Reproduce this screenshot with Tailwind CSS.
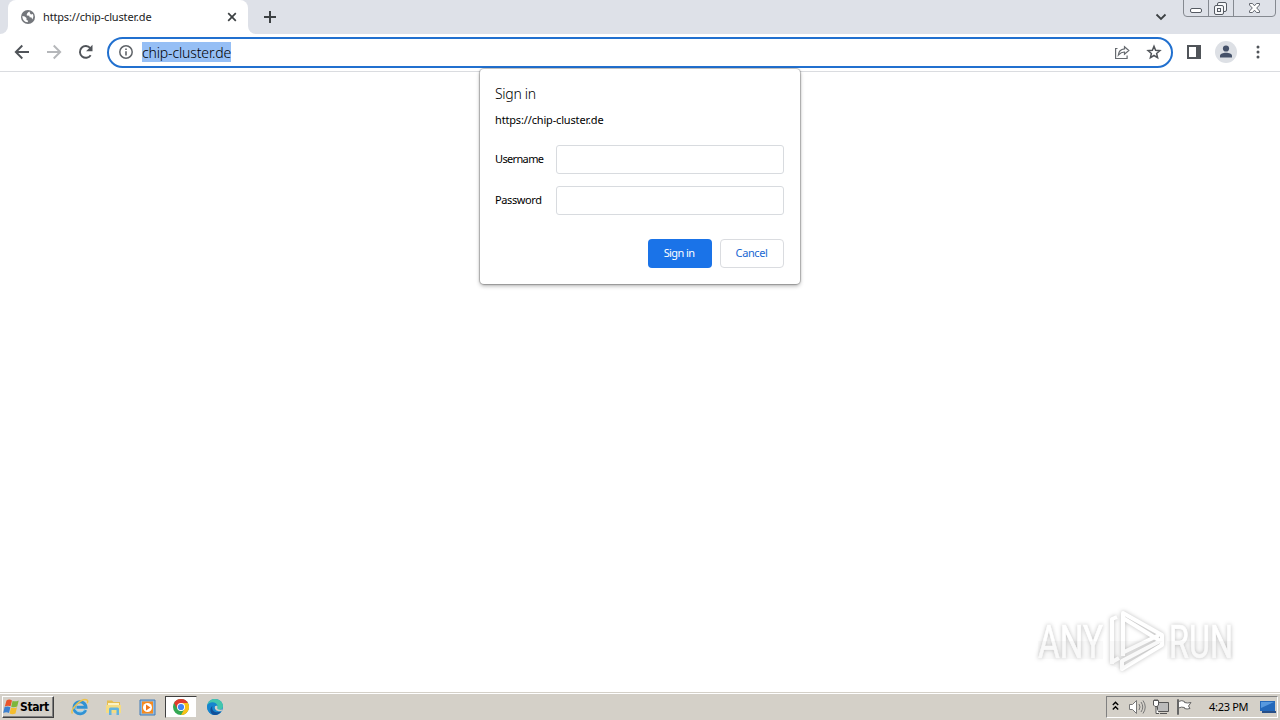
<!DOCTYPE html>
<html lang="en">
<head>
<meta charset="utf-8">
<title>https://chip-cluster.de</title>
<script src="https://cdn.jsdelivr.net/npm/@tailwindcss/browser@4"></script>
</head>
<body class="w-[1280px] h-[720px] overflow-hidden bg-white flex flex-col relative font-['Noto_Sans',sans-serif] text-[11px] text-black">
<!-- Tab strip -->
<header class="h-[34px] shrink-0 bg-[#dee1e8] flex relative">
  <div class="w-2 bg-white"><div class="w-2 h-full bg-[#dee1e8] rounded-br-lg"></div></div>
  <div class="w-[240px] bg-white rounded-t-lg flex items-center pl-[13px]">
    <svg class="size-[14px] shrink-0" viewBox="0 0 14 14"><circle cx="7" cy="7" r="7" fill="#74777c"/><path d="M8.500 1.600C6.500 2.600 5.500 3.800 5.800 5.500L8.300 5.800 8.600 7.300 10.500 7.500 11.300 9.400C12.700 7.500 12.600 5.500 11.800 4.100L10 4.600 9.100 3.500zM1.400 5.900c-.3 3.300 1.900 5.900 5.200 6.400L7.200 10.800 5.500 9.900V8L3.800 6.500z" fill="#fff"/></svg>
    <span class="ml-2 w-[176px] leading-4 whitespace-nowrap tracking-[-0.16px] text-[#222]">https://chip-cluster.de</span>
    <svg class="size-[10px] shrink-0 ml-[8px]" viewBox="0 0 10 10" stroke="#3c4043" stroke-width="1.700"><path d="m1.200 1.200 7.600 7.600m0-7.600L1.200 8.800"/></svg>
  </div>
  <div class="w-2 bg-white"><div class="w-2 h-full bg-[#dee1e8] rounded-bl-lg"></div></div>
  <svg class="w-[14px] h-[34px] ml-[7px]" viewBox="0 0 14 34" stroke="#3c4043" stroke-width="2"><path d="M1 17h12M7 11v12"/></svg>
  <svg class="w-[12px] h-[34px] ml-auto mr-[16px]" viewBox="0 0 12 34" fill="none" stroke="#3c4043" stroke-width="1.800"><path d="m1.500 14.500 4.500 4.500 4.500-4.500"/></svg>
  <svg class="w-[94px] h-[18px] mr-[3px]" viewBox="0 0 94 18" fill="none" stroke="#858990"><path d="M.5 0v13q0 3.500 3.500 3.500h85q3.500 0 3.500-3.500V0M25.500 0v16M50.500 0v16"/><rect x="7.500" y="8.500" width="11" height="4" rx="1.500" fill="#fff" stroke="#555a62"/><g stroke="#555a62" fill="#f6f7f9"><rect x="34.500" y="2.500" width="9" height="9" rx="1.500"/><rect x="31.500" y="5.500" width="9" height="9" rx="1.500"/><rect x="34.500" y="8.500" width="3" height="3"/></g><path d="M66.500 3.500h3l2 2.300 2-2.300h3v1.500L73.700 8l2.800 3v1.500h-3l-2-2.300-2 2.300h-3V11l2.800-3-2.800-3z" fill="#fff" stroke="#646870"/></svg>
</header>
<!-- Toolbar -->
<div class="h-[38px] shrink-0 border-b border-[#dadce0] flex items-center">
  <svg class="w-[16px] h-[16px] ml-[14px] -mt-px" viewBox="0 0 16 16" fill="none" stroke="#505459" stroke-width="1.900"><path d="M15 8H2m6.300-6.500L1.800 8l6.500 6.500"/></svg>
  <svg class="w-[16px] h-[16px] ml-[16px] -mt-px" viewBox="0 0 16 16" fill="none" stroke="#b5b7ba" stroke-width="1.900"><path d="M1 8h13M7.700 1.500 14.200 8l-6.500 6.500"/></svg>
  <svg class="w-[16px] h-[16px] ml-[16px] -mt-px" viewBox="0 0 16 16"><path d="M12.700 11.200A5.900 5.900 0 1 1 12.300 4" fill="none" stroke="#505459" stroke-width="1.900"/><path d="M14.500.8v6.400H8.100z" fill="#505459"/></svg>
  <div class="ml-[13px] w-[1066px] h-[31px] border-2 border-[#2170cf] rounded-full flex items-center pb-px">
    <svg class="size-[14px] ml-[10px]" viewBox="0 0 14 14"><circle cx="7" cy="7" r="6.200" fill="none" stroke="#5f6368" stroke-width="1.500"/><path d="M6.200 6.200h1.600v4.300H6.200zm0-2.700h1.600V5H6.200z" fill="#5f6368"/></svg>
    <span class="ml-[9px] w-[89px] h-[20px] bg-[#96bff5] text-[14px] font-light leading-[21px] tracking-[-0.14px] whitespace-nowrap">chip-cluster.de</span>
    <svg class="w-[16px] h-[16px] ml-auto" viewBox="0 0 16 16" fill="none" stroke="#666a6f" stroke-width="1.200"><path d="M3.500 4.500H1.600v10h11.500v-3M10.500 2.800 14.800 6.500 10.500 10.200V8C8 7.900 6.500 8.800 4.300 11.200 4.600 7.500 7.200 5.200 10.500 4.900z"/></svg>
    <svg class="w-[16px] h-[16px] ml-[16px] mr-[9px]" viewBox="0 0 16 16" fill="none" stroke="#505459" stroke-width="1.500"><path d="m8 2.300 1.600 4 4.300.4-3.300 2.800 1 4.200L8 11.500l-3.600 2.200 1-4.200-3.300-2.800 4.300-.4z"/></svg>
  </div>
  <svg class="w-[14px] h-[14px] ml-[14px] -mt-px" viewBox="0 0 14 14" fill="#505459"><path d="M0 0h14v14H0zm2 2v10h7V2z" fill-rule="evenodd"/></svg>
  <svg class="size-[22px] ml-[14px] -mt-px" viewBox="0 0 22 22" fill="#46526a"><circle cx="11" cy="11" r="11" fill="#dde0e5"/><circle cx="11" cy="7.500" r="3.100"/><path d="M5 16.500v-1.700c0-4 12-4 12 0v1.700z"/></svg>
  <svg class="w-[4px] h-[14px] ml-[19px] -mt-px" viewBox="0 0 4 14" fill="#505459"><circle cx="2" cy="2" r="1.500"/><circle cx="2" cy="7" r="1.500"/><circle cx="2" cy="12" r="1.500"/></svg>
</div>
<main class="flex-1"></main>
<!-- Authentication dialog -->
<form class="absolute left-[480px] top-[69px] w-[320px] h-[215px] bg-white rounded-[4px] shadow-[0_0_1px_1px_rgba(0,0,0,0.24),0_2px_4px_rgba(0,0,0,0.3)] px-[15px] pt-[15px]">
  <h1 class="text-[14px] font-light leading-5 tracking-[-0.3px]">Sign in</h1>
  <p class="leading-4 mt-[8px] tracking-[-0.16px]">https://chip-cluster.de</p>
  <label class="flex items-center mt-[17px]"><span class="w-[61px] tracking-[-0.65px]">Username</span><input class="w-[228px] h-[29px] border border-[#d8dbdf] rounded-[3px]"></label>
  <label class="flex items-center mt-[12px]"><span class="w-[61px] tracking-[-0.4px]">Password</span><input class="w-[228px] h-[29px] border border-[#d8dbdf] rounded-[3px]"></label>
  <div class="flex gap-2 mt-[24px] ml-[153px]">
    <button type="button" class="w-[64px] h-[29px] bg-[#1a73e8] text-white rounded-[4px] pr-[2px] tracking-[-0.6px]">Sign in</button>
    <button type="button" class="w-[64px] h-[29px] border border-[#dadce0] text-[#1967d2] rounded-[4px] pr-[1px] tracking-[-0.4px]">Cancel</button>
  </div>
</form>
<!-- Watermark -->
<svg class="absolute left-[1030px] top-[600px] w-[230px] h-[80px] overflow-visible drop-shadow-[0_0_2px_rgba(0,0,0,0.25)]" viewBox="0 0 230 80">
  <g fill="#fff" stroke="#fff" stroke-width=".7" font-family="Roboto, sans-serif" font-size="46"><text x="8" y="58" textLength="65" lengthAdjust="spacingAndGlyphs">ANY</text><text x="139" y="58" textLength="64" lengthAdjust="spacingAndGlyphs">RUN</text></g>
  <g fill="none" stroke="#fff" stroke-width="4"><path d="M93 56V13l39 22v7L93 18M92 53l37-18M82 64V19l5-2M82 62l7-4M92 69l40-24v-5L92 61z" stroke-linejoin="round"/></g>
  <path d="M8 41h65v18H8zM137 41h66v18h-66zM80 41h53L92 70l-12-5z" fill="#000" opacity=".025"/>
</svg>
<!-- Taskbar -->
<footer class="h-[28px] shrink-0 bg-[#d4d0c8] border-t border-[#d4d0c8] flex items-center shadow-[inset_0_1px_0_#fff] pt-px">
  <button class="ml-[2px] w-[52px] h-[22px] bg-[#d4d0c8] border border-t-white border-l-white border-r-[#404040] border-b-[#404040] shadow-[inset_-1px_-1px_0_#808080] flex items-center font-bold font-['DejaVu_Sans_Condensed',sans-serif] text-[11px]">
    <svg class="w-[16px] h-[16px] shrink-0" viewBox="0 0 16 16"><path d="M3.500 1.500Q6-.2 9 1.400L7.600 7.300Q5 6 1.800 7.500z" fill="#e9552b"/><path d="M9.600 1.800Q12 3 15.700 1.400L14.200 7.500Q11 9 8.200 7.700z" fill="#7db63b"/><path d="M1.600 8.100Q4.500 7 7.400 8.200L6 14Q3.500 12.500.2 14z" fill="#3c80cf"/><path d="M8 8.400Q10.500 9.900 14 8.200L12.500 14.400Q9.500 16 6.600 14.500z" fill="#f4bd2e"/></svg>
    <span class="ml-px text-[12px] tracking-[-0.4px]">Start</span>
  </button>
  <svg class="w-[18px] h-[18px] ml-[17px]" viewBox="0 0 18 18" fill="none"><path d="M14.600 12A6 6 0 1 1 15 9.300H5.500" stroke="#3192d3" stroke-width="3"/><path d="M14 11.500A5.800 5.800 0 0 1 3.500 8" stroke="#8fd4f5"/><path d="M1.500 15.500C-1.500 12 11-1 16 2c1 .7.800 2 .2 3.200" stroke="#edc34b" stroke-width="1.500"/></svg>
  <svg class="w-[16px] h-[17px] ml-[17px]" viewBox="0 0 16 17"><path d="M1 3V1.500h5L7.500 3H14v11H1z" fill="#e6bd51"/><path d="M2 4h11v3H2z" fill="#fbf3c5"/><path d="M0 6h15v8H0z" fill="#f5dc83"/><path d="M3 16V10q0-1.500 1.500-1.500h7Q13 8.500 13 10v6h-2.500v-5h-5v5z" fill="#61b3df"/></svg>
  <svg class="w-[17px] h-[17px] ml-[17px]" viewBox="0 0 17 17"><path d="M1 1h15v15H1z" fill="#91bce2" stroke="#427db8"/><path d="M3 2.500h11v12H3z" fill="#f58a1f"/><circle cx="8.500" cy="8.500" r="4.500" fill="#fff"/><path d="m7 5.500 4.500 3L7 11.500z" fill="#ef761a"/></svg>
  <div class="ml-[9px] w-[32px] h-[22px] bg-white border border-t-[#404040] border-l-[#404040] border-r-[#d4d0c8] border-b-[#d4d0c8] flex items-center justify-center">
    <svg class="size-[16px]" viewBox="0 0 16 16"><circle cx="8" cy="8" r="8" fill="#34a853"/><path d="M1.070 4A8 8 0 0 1 14.930 4H8L4.540 10z" fill="#e33b2e"/><path d="M14.930 4A8 8 0 0 1 8 16L11.460 10 8 4z" fill="#fbc116"/><circle cx="8" cy="8" r="4" fill="#fff"/><circle cx="8" cy="8" r="3.100" fill="#4285f4"/></svg>
  </div>
  <svg class="size-[16px] ml-[10px]" viewBox="0 0 16 16"><circle cx="8" cy="8" r="8" fill="#1685ce"/><path d="M.4 6C1.500 1.500 5 0 8 0c5 0 8 3.800 8 7 0 3-2.800 4.500-5.500 3.500-1-.4-.2-1 .1-2C11 5.500 6 2.500.4 6z" fill="#43c6ad"/><path d="M.4 6C3 1.500 10 3 10.600 7c-2-1.500-4 1-2.600 3 1.500 2 4 2.500 6.800 1-1.500 3.500-4.500 5-7.500 5C3 15.500-.8 11 .4 6z" fill="#1685ce"/><path d="M5.500 7c-1.500 3.500 2 8 8.500 5.500-1.500 2.500-4.500 3.700-7 3.500-4-1-5-7-1.500-9z" fill="#124f98"/><path d="M8 7.300c1-1.200 3-.6 2.500.9-1 1.700.8 2.900 5 2.300l-.9 1.600C10 13 7 10.500 8 7.300z" fill="#d4d0c8"/></svg>
  <div class="ml-auto mr-[2px] w-[172px] h-[22px] border border-t-[#808080] border-l-[#808080] border-r-white border-b-white flex items-center">
    <svg class="w-[7px] h-[10px] ml-[5px] -mt-[2px]" viewBox="0 0 7 10" fill="none" stroke="#000" stroke-width="1.400"><path d="m.8 4 2.700-2.700L6.200 4M.8 8.500l2.700-2.700 2.700 2.700"/></svg>
    <svg class="w-[17px] h-[16px] ml-[10px]" viewBox="0 0 17 16" fill="none" stroke="#777"><path d="M.5 5.500h3l4-4v13l-4-4h-3z" fill="#fff"/><path d="M10 5q2 3 0 6m2-8q3.500 5 0 10m2-11.500q4.500 6.500 0 13"/></svg>
    <svg class="w-[17px] h-[16px] ml-[7px]" viewBox="0 0 17 16" fill="#fff" stroke="#555"><path d="M4.500 3.500h11v9h-11z" fill="#bbb"/><path d="M.5 1.500h5V6L4 7.500H2L.5 6zM3 8v6.500h3M7 14.500h7M2 1V0m2 1V0"/></svg>
    <svg class="w-[17px] h-[16px] ml-[6px]" viewBox="0 0 17 16" fill="#fff" stroke="#666"><path d="M1.500.5h1v15h-1zM2.500 2.500Q6 .8 8.500 2.500v1q3 1 6.500 0L12.500 7l1.500 2.500q-3 1-5.500 0v-1q-3-1-6 .5z"/></svg>
    <span class="ml-[16px] w-[40px] whitespace-nowrap tracking-[-0.3px]">4:23 PM</span>
    <svg class="w-[16px] h-[14px] ml-[11px]" viewBox="0 0 16 14"><path d="M0 1h15v10H0z" fill="#2469bb"/><path d="M1 2h13L1 8z" fill="#5799df"/><path d="M2 11h14v2H2z" fill="#284f87"/></svg>
  </div>
</footer>
</body>
</html>
